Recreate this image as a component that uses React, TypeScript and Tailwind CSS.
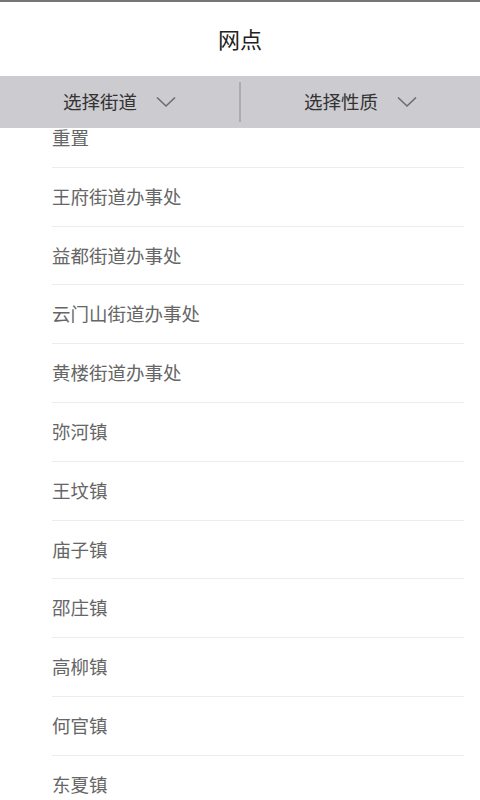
import React from 'react'

const towns = [
  '重置',
  '王府街道办事处',
  '益都街道办事处',
  '云门山街道办事处',
  '黄楼街道办事处',
  '弥河镇',
  '王坟镇',
  '庙子镇',
  '邵庄镇',
  '高柳镇',
  '何官镇',
  '东夏镇',
  '谭坊镇',
]

function Chevron() {
  return (
    <svg width="20" height="12" viewBox="0 0 20 12" fill="none" className="shrink-0">
      <path d="M1 1.5 L10 10 L19 1.5" stroke="#6b6b70" strokeWidth="1.6" />
    </svg>
  )
}

function FilterButton({ label }: { label: string }) {
  return (
    <button className="flex flex-1 items-center justify-center gap-[19px] text-[18.5px] text-[#333]">
      <span>{label}</span>
      <Chevron />
    </button>
  )
}

export default function App() {
  return (
    <div
      className="flex h-[800px] w-[480px] flex-col overflow-hidden bg-white"
      style={{ fontFamily: '"Noto Sans CJK SC", "Noto Sans", sans-serif' }}
    >
      <div className="h-[2px] bg-[#767676]" />
      <header className="flex h-[74px] items-center justify-center">
        <h1 className="-mt-[2px] text-[22px] text-[#222]">网点</h1>
      </header>

      <div className="flex h-[52px] items-center bg-[#cbcbd0]">
        <FilterButton label="选择街道" />
        <div className="h-[40px] w-[2px] bg-[#acacb0]" />
        <FilterButton label="选择性质" />
      </div>

      {/* list is scrolled down a little, first row sits under the filter bar */}
      <div className="flex-1 overflow-hidden">
        <ul className="-mt-[19px] pl-[52px] pr-[16px]">
          {towns.map((t) => (
            <li
              key={t}
              className="flex h-[58.8px] items-center border-b border-[#ececec] text-[18.5px] text-[#666]"
            >
              {t}
            </li>
          ))}
        </ul>
      </div>
    </div>
  )
}
